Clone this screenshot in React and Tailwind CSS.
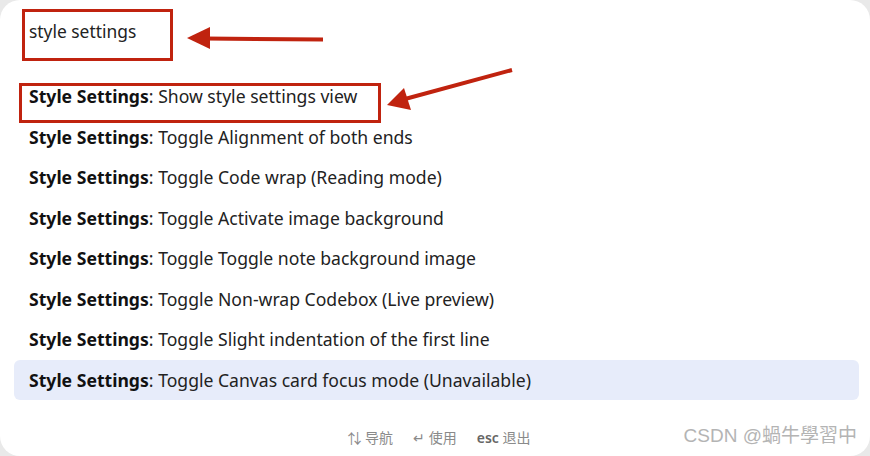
import React from 'react';

const commands = [
  'Show style settings view',
  'Toggle Alignment of both ends',
  'Toggle Code wrap (Reading mode)',
  'Toggle Activate image background',
  'Toggle Toggle note background image',
  'Toggle Non-wrap Codebox (Live preview)',
  'Toggle Slight indentation of the first line',
  'Toggle Canvas card focus mode (Unavailable)',
];

const font = { fontFamily: '"Noto Sans", "Noto Sans CJK SC", sans-serif' };

const App = () => {
  return (
    <div className="w-[870px] h-[456px] bg-[#e9e9e9] overflow-hidden">
      <div
        className="relative w-full h-full bg-white rounded-[20px] flex flex-col"
        style={font}
      >
        {/* search input */}
        <div className="h-[76px] shrink-0 pl-[29px] pt-[18px] text-[17.4px] text-[#222]">style settings</div>

        {/* result list */}
        <div className="flex flex-col pl-[14px] pr-[11px]">
          {commands.map((cmd, i) => (
            <div
              key={cmd}
              className={`h-[40.5px] flex items-center px-[15px] rounded-[6px] text-[17.6px] text-[#222] ${i === commands.length - 1 ? 'bg-[#e7ecfa]' : ''}`}
            >
              <span className="font-bold text-[#111]">Style Settings</span>
              <span>: {cmd}</span>
            </div>
          ))}
        </div>

        {/* footer */}
        <div className="flex-1 flex items-center justify-center gap-[20px] pt-[18px] pl-[8px] text-[14px] text-[#8a8a8a]">
          <span>⇅ 导航</span>
          <span>↵ 使用</span>
          <span><span className="font-semibold text-[#666]">esc</span> 退出</span>
        </div>

        {/* watermark */}
        <div
          className="absolute right-[13px] bottom-[6px] text-[19px] text-[#b4b4b4]"
          style={{ fontFamily: '"Liberation Sans", "Noto Sans CJK TC", sans-serif' }}
        >
          CSDN @蝸牛學習中
        </div>

        {/* annotations */}
        <div className="absolute left-[22px] top-[9px] w-[151px] h-[52px] border-[3px] border-[#c0230f]" />
        <div className="absolute left-[19px] top-[83px] w-[362px] h-[40px] border-[3px] border-[#c0230f]" />
        <svg className="absolute left-0 top-0" width="870" height="456">
          <path d="M323 39.5 L205 38.5" stroke="#c0230f" strokeWidth="4" />
          <path d="M187 38 L210 27 L210 49 Z" fill="#c0230f" />
          <path d="M512 70 L405 99" stroke="#c0230f" strokeWidth="4" />
          <path d="M387 105 L404 88 L411 110 Z" fill="#c0230f" />
        </svg>
      </div>
    </div>
  );
};

export default App;
